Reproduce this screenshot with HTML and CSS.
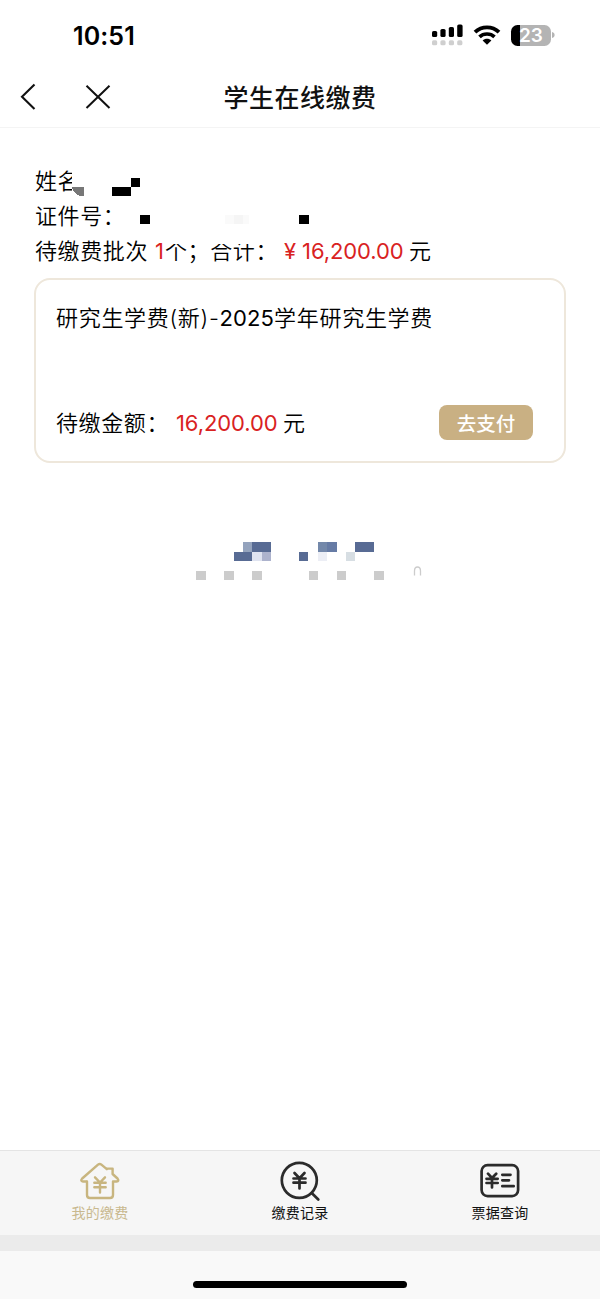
FILE: index.html
```html
<!DOCTYPE html>
<html lang="zh-CN">
<head>
<meta charset="utf-8">
<title>学生在线缴费</title>
<link rel="stylesheet" href="styles.css">
</head>
<body>
<div class="screen">
  <header class="status">
    <span class="clock">10:51</span>
    <div class="status-icons">
      <svg class="signal" width="32" height="22" viewBox="0 0 32 22">
        <rect x="0" y="7" width="5.2" height="6" rx="1.6"/><rect x="8.4" y="5" width="5.2" height="8" rx="1.6"/><rect x="16.8" y="3" width="5.2" height="10" rx="1.6"/><rect x="25.2" y="0.5" width="5.4" height="12.5" rx="1.6"/>
        <g fill="#cfcfcf"><rect x="0" y="16.3" width="5.2" height="5" rx="1.6"/><rect x="8.4" y="16.3" width="5.2" height="5" rx="1.6"/><rect x="16.8" y="16.3" width="5.2" height="5" rx="1.6"/><rect x="25.2" y="16.3" width="5.2" height="5" rx="1.6"/></g>
      </svg>
      <svg class="wifi" width="28" height="20" viewBox="0 0 28 20">
        <path d="M2 7.200C8.700.8 19.300.8 26 7.200" fill="none" stroke="#000" stroke-width="3.900"/>
        <path d="M6.500 11.900c4-3.900 11-3.900 15 0" fill="none" stroke="#000" stroke-width="3.600"/>
        <path d="M9.600 15.500c2.400-2.300 6.400-2.300 8.800 0L14 19.800z"/>
      </svg>
      <div class="battery"><span>23</span></div>
      <svg width="3" height="8" viewBox="0 0 3 8"><path d="M0 1C3.500 1.500 3.500 6.500 0 7z" fill="#b4b4b4"/></svg>
    </div>
  </header>
  <nav class="navbar">
    <div class="nav-actions">
      <svg width="16" height="28" viewBox="0 0 16 28"><path d="M14.500 1.500 2 13.800 14.500 26" fill="none" stroke="#111" stroke-width="2.100"/></svg>
      <svg width="26" height="26" viewBox="0 0 26 26"><path d="M1.500 1.700 24.500 24M24.500 1.700 1.500 24" fill="none" stroke="#111" stroke-width="2"/></svg>
    </div>
    <h1>学生在线缴费</h1>
  </nav>
  <main class="content">
    <section class="summary">
      <p>姓名</p>
      <p>证件号：</p>
      <p>待缴费批次<span class="red count">1</span>个；合计：<span class="red yen">¥</span><span class="red total">16,200.00</span>元</p>
      <svg class="mask" width="400" height="110" viewBox="20 160 400 110" shape-rendering="crispEdges">
        <path d="M71.500 165H100V200H71.500zM166 230H208V244H166zM208 230H258V244H208z" fill="#fff"/>
        <path d="M71.500 187H84V196H80C76 195 73 191 71.500 187z" fill="#777"/>
        <path d="M112 187H131V177.500H140V187H131V196H112zM140 215H149.500V224H140zM299 215H308.500V224H299z"/>
        <path d="M225 215H234V224H225zM243 215H249V224H243z" fill="#fafafa"/><path d="M234 215H243V224H234z" fill="#f5f5f5"/>
      </svg>
    </section>
    <section class="card">
      <h2>研究生学费(新)-<span class="year">2025</span>学年研究生学费</h2>
      <div class="card-row">
        <p>待缴金额：<span class="red amount">16,200.00</span>元</p>
        <button>去支付</button>
      </div>
    </section>
    <svg class="mosaic" width="240" height="44" viewBox="190 538 240 44" shape-rendering="crispEdges">
      <path d="M252 542H271V551.500H252zM233.500 551.500H252V561H233.500zM299 551.500H308V561H299zM355 542H374V551.500H355z" fill="#586b94"/>
      <path d="M243 542H252V551.500H243z" fill="#94a3bd"/>
      <path d="M252 551.500H262V561H252z" fill="#dfe3f0"/><path d="M262 551.500H271V561H262z" fill="#adb3cd"/>
      <path d="M318 542H327V551.500H318z" fill="#7388aa"/><path d="M327 542H336.500V551.500H327z" fill="#667ba5"/>
      <path d="M318 551.500H327V561H318z" fill="#eceef5"/><path d="M346 551.500H355V561H346z" fill="#d7dee3"/>
      <path d="M196 570.500h9.500v9.500h-9.500zM224 570.500h9.500v9.500h-9.500zM252 570.500h9.500v9.500h-9.500zM308.500 570.500h9.500v9.500h-9.500zM336.500 570.500h9.500v9.500h-9.500zM374 570.500h9.500v9.500h-9.500z" fill="#ccc"/>
      <path d="M414.500 575.500V571Q414.500 567 417.500 567T420.500 571V575.500" fill="none" stroke="#ccc" stroke-width="1.300" shape-rendering="auto"/>
    </svg>
  </main>
  <footer class="tabs">
    <a class="tab active">
      <svg width="42" height="42" viewBox="79 1160 42 42"><path d="M86.500 1181.500H83Q80 1181 82.200 1178.500L98 1164.600Q99.700 1163.200 101.400 1164.600L106.800 1169.200V1168.600H112.600V1174L117.500 1178.500Q119.500 1181 116.500 1181.500H113V1195Q113 1198 110 1198H90Q87 1198 87 1195V1181.500" /><path d="M95 1177.300 100 1182.500 105 1177.300M94.300 1182.700H105.700M94.300 1187.300H105.700M100 1182.500V1192.500"/></svg>
      <span>我的缴费</span>
    </a>
    <a class="tab">
      <svg width="42" height="42" viewBox="279 1160 42 42"><circle cx="299.300" cy="1180.300" r="17.500"/><path d="M311.700 1193 318.300 1199.500M294.500 1173 299.500 1178.300 304.500 1173M293.500 1178.500H305.500M293.500 1182.700H305.500M299.500 1178.300V1188.500"/></svg>
      <span>缴费记录</span>
    </a>
    <a class="tab">
      <svg width="42" height="42" viewBox="479 1160 42 42"><rect x="481.600" y="1165.100" width="36.500" height="31" rx="6"/><path d="M488 1173.700 492 1178 496.200 1173.700M486.500 1178.800H497.700M486.500 1183H497.700M492 1178V1187.500M502.300 1174.800H510.500M502.300 1180.300H509M502.300 1186.200H513.700"/></svg>
      <span>票据查询</span>
    </a>
  </footer>
  <div class="band"></div>
  <div class="home"><div class="indicator"></div></div>
</div>
</body>
</html>
```
FILE: styles.css
```css
* { box-sizing: border-box; margin: 0; padding: 0; }
body { background: #fff; color: #111; font-family: "Inter", "Noto Sans CJK SC", sans-serif; }
.screen { width: 600px; height: 1299px; display: flex; flex-direction: column; }
svg { display: block; flex: none; }

.status { height: 67px; display: flex; justify-content: space-between; padding: 0 45px 0 73px; }
.clock { font-size: 25px; font-weight: 600; line-height: 30px; margin-top: 21px; color: #000; letter-spacing: 0.1px; }
.status-icons { display: flex; align-items: flex-start; padding-top: 24px; }
.wifi { margin: 1px 10px 0 9px; }
.battery { width: 40px; height: 21px; margin-top: 1px; border-radius: 6.5px; background: linear-gradient(90deg, #000 9px, #b4b4b4 9px); color: #fff; font-size: 19px; font-weight: 600; line-height: 21px; text-align: center; }
.status-icons > svg:last-child { margin: 7px 0 0 1px; }

.navbar { height: 61px; display: grid; grid-template-columns: 200px 200px 200px; align-items: center; border-bottom: 1px solid #f4f4f4; }
.nav-actions { display: flex; align-items: center; gap: 49px; padding-left: 20px; }
.navbar h1 { font-size: 25px; font-weight: 500; letter-spacing: 0.5px; text-align: center; white-space: nowrap; line-height: 36px; padding-top: 1px; }

.content { flex: 1; padding: 35px 34px 0; }
.summary { position: relative; padding-left: 1px; }
.summary p { height: 35px; line-height: 36px; white-space: nowrap; }
.summary p, .card p, .card h2 { font-size: 22px; font-weight: 350; letter-spacing: 0.6px; color: #000; }
.red { color: #d9221f; display: inline-block; font-weight: 400; letter-spacing: 0; }
.count { width: 17px; padding-left: 7px; }
.yen { width: 24px; padding-left: 6px; }
.total { width: 107px; letter-spacing: -0.1px; }
.mask { position: absolute; left: -14px; top: -3px; }

.card { height: 185px; margin-top: 10px; padding: 21px 31px 21px 20px; border: 2px solid #eee7db; border-radius: 16px; display: flex; flex-direction: column; justify-content: space-between; }
.card h2 { line-height: 34px; letter-spacing: 0.7px; white-space: nowrap; }
.year { font-weight: 400; letter-spacing: 0.1px; }
.card-row { display: flex; align-items: center; justify-content: space-between; }
.card p { line-height: 34px; }
.amount { width: 107px; margin-left: 7px; letter-spacing: -0.1px; }
.card button { width: 94px; height: 35px; border: 0; border-radius: 8px; background: #c9b083; color: #fff; font: 500 19.500px/34px "Noto Sans CJK SC", sans-serif; }

.mosaic { margin: 75px 0 0 156px; }

.tabs { height: 85px; flex: none; display: grid; grid-template-columns: repeat(3, 1fr); background: #f6f6f6; border-top: 1px solid #e4e4e4; }
.tab { display: flex; flex-direction: column; align-items: center; padding-top: 9px; color: #111; }
.tab svg { fill: none; stroke: #2b2b2b; stroke-width: 2.700; stroke-linecap: round; stroke-linejoin: round; }
.tab.active { color: #c9b98f; }
.tab.active svg { stroke: #c8b57f; stroke-width: 2.400; }
.tab span { font-size: 14px; line-height: 20px; letter-spacing: 0.2px; margin-top: 1px; }
.band { height: 16px; flex: none; background: #ebebeb; }
.home { height: 48px; flex: none; display: flex; justify-content: center; align-items: flex-start; padding-top: 30px; background: #f9f9f9; }
.indicator { width: 214px; height: 7px; border-radius: 4px; background: #000; }
```
